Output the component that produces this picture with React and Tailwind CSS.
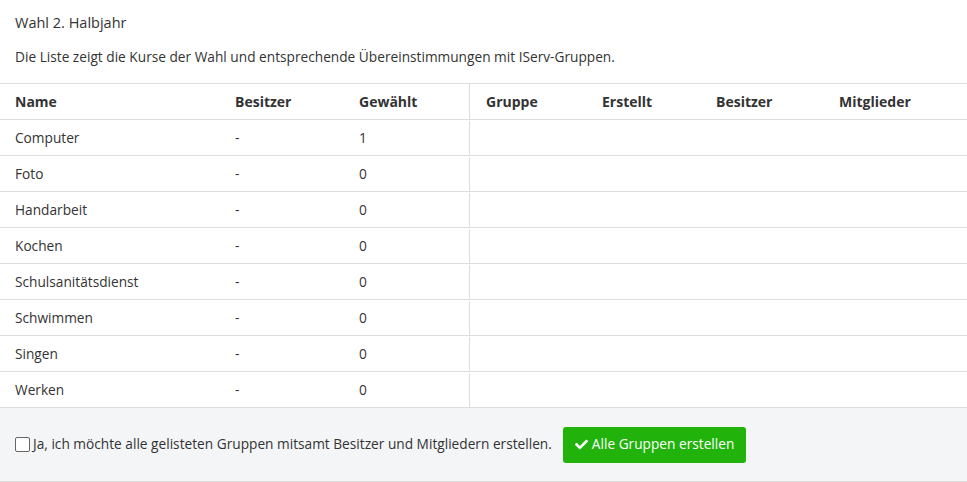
import { useState } from "react";

const courses = [
  { name: "Computer", owner: "-", chosen: 1 },
  { name: "Foto", owner: "-", chosen: 0 },
  { name: "Handarbeit", owner: "-", chosen: 0 },
  { name: "Kochen", owner: "-", chosen: 0 },
  { name: "Schulsanitätsdienst", owner: "-", chosen: 0 },
  { name: "Schwimmen", owner: "-", chosen: 0 },
  { name: "Singen", owner: "-", chosen: 0 },
  { name: "Werken", owner: "-", chosen: 0 },
];

const rowCls =
  "grid grid-cols-[220px_124px_125px_118px_114px_123px_1fr] h-[36px] border-b border-[#dddddd] items-center";

function CheckIcon() {
  return (
    <svg viewBox="0 0 512 512" className="w-[13px] h-[13px] fill-white">
      <path d="M173.9 439.4 7.5 273c-10-10-10-26.2 0-36.2l36.2-36.2c10-10 26.2-10 36.2 0L192 312.7 432.1 72.6c10-10 26.2-10 36.2 0l36.2 36.2c10 10 10 26.2 0 36.2L210.1 439.4c-10 10-26.2 10-36.2 0z" />
    </svg>
  );
}

export default function App() {
  const [confirmed, setConfirmed] = useState(false);

  return (
    <div className="w-[967px] h-[482px] bg-white text-[13.7px] text-[#333333] font-['Open_Sans',sans-serif] overflow-hidden">
      <div className="px-[15px] pt-[13px]">
        <h3 className="leading-[20px] text-[14.5px]">Wahl 2. Halbjahr</h3>
        <p className="leading-[20px] mt-[14px]">
          Die Liste zeigt die Kurse der Wahl und entsprechende Übereinstimmungen mit IServ-Gruppen.
        </p>
      </div>

      <div className="mt-[16px] border-t border-[#dddddd]">
        <div className={rowCls + " font-bold text-[14px]"}>
          <div className="pl-[15px]">Name</div>
          <div className="pl-[15px]">Besitzer</div>
          <div className="pl-[15px]">Gewählt</div>
          <div className="h-full flex items-center border-l border-[#dddddd] pl-[16px]">Gruppe</div>
          <div className="pl-[15px]">Erstellt</div>
          <div className="pl-[15px]">Besitzer</div>
          <div className="pl-[15px]">Mitglieder</div>
        </div>
        {courses.map((c) => (
          <div key={c.name} className={rowCls + " pt-[1px]"}>
            <div className="pl-[15px]">{c.name}</div>
            <div className="pl-[15px]">{c.owner}</div>
            <div className="pl-[15px]">{c.chosen}</div>
            <div className="h-full border-l border-[#dddddd]"></div>
            <div></div>
            <div></div>
            <div></div>
          </div>
        ))}
      </div>

      <div className="h-[74px] bg-[#f4f5f7] border-b border-[#dddddd] flex items-center px-[15px]">
        <label className="flex items-center cursor-pointer">
          <input
            type="checkbox"
            checked={confirmed}
            onChange={(e) => setConfirmed(e.target.checked)}
            className="appearance-none w-[15px] h-[15px] border border-[#666666] rounded-[2px] bg-white mr-[3px]"
          />
          <span>Ja, ich möchte alle gelisteten Gruppen mitsamt Besitzer und Mitgliedern erstellen.</span>
        </label>
        <button className="ml-[11px] h-[36px] px-[12px] bg-[#21b20b] text-white rounded-[3px] flex items-center gap-[4px]">
          <CheckIcon />
          <span>Alle Gruppen erstellen</span>
        </button>
      </div>
    </div>
  );
}
